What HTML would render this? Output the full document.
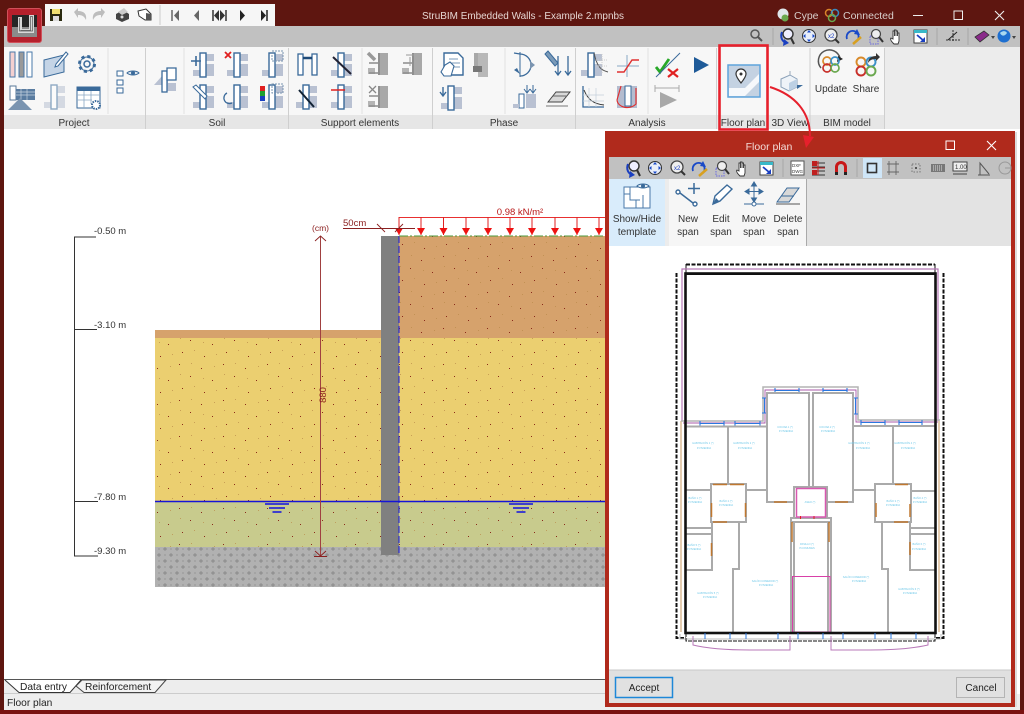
<!DOCTYPE html>
<html><head><meta charset="utf-8"><title>StruBIM Embedded Walls</title>
<style>html,body{margin:0;padding:0;background:#fff;overflow:hidden}svg{display:block;filter:blur(.35px)}text{font-family:"Liberation Sans",sans-serif}</style></head>
<body>
<svg width="1024" height="714" viewBox="0 0 1024 714" xmlns="http://www.w3.org/2000/svg">
<defs>
<pattern id="dots" width="44" height="36" patternUnits="userSpaceOnUse">
<g fill="#8a2a1a"><rect x="3" y="4" width="1" height="1"/><rect x="25" y="8" width="1" height="1"/><rect x="14" y="16" width="1" height="1"/><rect x="36" y="20" width="1" height="1"/><rect x="6" y="28" width="1" height="1"/><rect x="28" y="32" width="1" height="1"/></g>
<g fill="#b98a4a" opacity=".7"><rect x="15" y="3" width="1" height="1"/><rect x="38" y="6" width="1" height="1"/><rect x="4" y="14" width="1" height="1"/><rect x="27" y="18" width="1" height="1"/><rect x="18" y="26" width="1" height="1"/><rect x="40" y="30" width="1" height="1"/></g>
</pattern>
<pattern id="rock" width="12" height="12" patternUnits="userSpaceOnUse">
<rect width="12" height="12" fill="#b1b1b1"/>
<path d="M1 3H5M3 1V5M7 9H11M9 7V11" stroke="#7f7f7f" stroke-width=".7"/>
<rect x="8" y="2" width="2" height="2" fill="#a4a4a4"/><rect x="2" y="8" width="2" height="2" fill="#a4a4a4"/>
</pattern>
<g id="w"><path fill="#b9c1d2" d="M-10 5H-3V11H-10ZM3-11H11V-4H3ZM3-1H11V11H3Z"/><rect x="-3" y="-12" width="6" height="24" fill="#fff" stroke="#3a6a9a" stroke-width="1.400"/></g>
<g id="wg"><path fill="#b4b4b4" d="M-10 4H-3V10H-10Z"/><rect x="2" y="-11" width="8" height="22" fill="#a8a8a8"/><path d="M-9-1H2M-9 9H2" stroke="#8c8c8c" stroke-width="1.600"/><rect x="0" y="-11" width="2" height="22" fill="#8f8f8f"/></g>
<g id="ar"><path d="M0 0V18" stroke="#e02020" stroke-width="1"/><path d="M-4 11H4L0 18Z" fill="#ee1111"/></g>
<g id="ws"><path d="M-12 0H12" stroke="#1010e0" stroke-width="1.500"/><path d="M-8 4H8" stroke="#1010e0" stroke-width="1.500"/><path d="M-4.500 8H4.500" stroke="#1010e0" stroke-width="1.500"/></g>
<g id="zoomset">
<circle cx="1" cy="-2" r="5" fill="#eef" stroke="#333" stroke-width="1.400"/><path d="M4 2L7 8" stroke="#333" stroke-width="2"/><path d="M-5-4C-7 1-5 6 0 7" fill="none" stroke="#1a3fc0" stroke-width="2"/><path d="M-3 3L2 7-4 10Z" fill="#1a3fc0"/>
<circle cx="22" cy="0" r="6.500" fill="#e8eefa" stroke="#333"/><path d="M22-6L24-3.500H20ZM22 6L24 3.500H20ZM16 0L18.500-2V2ZM28 0L25.500-2V2Z" fill="#1a4ac8"/>
<circle cx="44" cy="-1" r="6" fill="#eee" stroke="#444" stroke-width="1.300"/><path d="M48 3L52 7" stroke="#333" stroke-width="2"/><text x="41" y="2" font-size="6" fill="#1a3fc0">x2</text>
<path d="M60 3a6 6 0 1 1 10 2" fill="none" stroke="#1a4ac8" stroke-width="1.800"/><path d="M70-7L73-1 67-2Z" fill="#1a4ac8"/><path d="M66 8L74 1" stroke="#d8a020" stroke-width="2.500"/>
<rect x="83" y="0" width="8" height="8" fill="none" stroke="#6a6ae0" stroke-dasharray="1.500 1"/><circle cx="89" cy="-2" r="4.500" fill="#eee" stroke="#444" stroke-width="1.200"/><path d="M92 1L96 6" stroke="#333" stroke-width="2"/>
<path d="M107 8c-3-3-4-5-3-6l2 1 0-8 1.500 0 0 5 0-6 1.500 0 0 6 0-5 1.500 0 0 5 0-3 1.500 0 0 8-1 3Z" fill="#fff" stroke="#333" stroke-width=".9"/>
<rect x="127" y="-6" width="13" height="13" fill="#fff" stroke="#444"/><rect x="127" y="-6" width="13" height="3" fill="#38b8c8"/><path d="M130-1L137 5" stroke="#1a3fc0" stroke-width="1.800"/><path d="M138 6H133L138 1Z" fill="#1a3fc0"/>
</g>
</defs>

<!-- window base -->
<rect width="1024" height="714" fill="#fff"/>
<rect width="1024" height="26" fill="#5e1610"/>
<rect y="26" width="1024" height="22" fill="#c1c1c1"/>
<rect y="47" width="1024" height="83" fill="#ececec"/>
<rect x="4" y="47" width="880" height="68" fill="#f7f7f7"/>
<rect x="4" y="115" width="880" height="14" fill="#e6e6e6"/>
<rect y="129" width="1024" height="1" fill="#fff"/>

<!-- drawing -->
<g>
<rect x="155" y="330" width="226" height="8" fill="#d6a26c"/>
<rect x="399" y="236" width="206" height="102" fill="#d6a26c"/>
<rect x="155" y="338" width="450" height="163" fill="#ebcf70"/>
<rect x="155" y="501" width="450" height="46" fill="#c8cb8d"/>
<rect x="155" y="338" width="226" height="209" fill="url(#dots)"/>
<rect x="399" y="236" width="206" height="311" fill="url(#dots)"/>
<rect x="155" y="547" width="450" height="40" fill="url(#rock)"/>
<rect x="381" y="236" width="18" height="319" fill="#808080"/>
<path d="M399 236V555" stroke="#1818e0" stroke-width="1" stroke-dasharray="7 3"/>
<path d="M155 501.500H605" stroke="#1414d8" stroke-width="1.500"/>
<use href="#ws" x="277" y="504"/><use href="#ws" x="521" y="504"/>
<path d="M399 236H605" stroke="#4e9a3c" stroke-width="1" stroke-dasharray="9 2 2 2"/>
<path d="M399 217.500H605" stroke="#e83030" stroke-width="1"/>
<use href="#ar" x="399" y="217"/><use href="#ar" x="421" y="217"/><use href="#ar" x="443.500" y="217"/><use href="#ar" x="466" y="217"/><use href="#ar" x="488" y="217"/><use href="#ar" x="510" y="217"/><use href="#ar" x="532" y="217"/><use href="#ar" x="555" y="217"/><use href="#ar" x="577" y="217"/><use href="#ar" x="599" y="217"/>
<text x="520" y="215" text-anchor="middle" font-size="9.500" fill="#b81818">0.98 kN/m²</text>
<text x="343" y="226" font-size="9.500" fill="#8a1c1c">50cm</text>
<path d="M343 228.500H415M377 224L385 232M395 232L403 224" stroke="#8a2020" stroke-width=".9" fill="none"/>
<text x="312" y="231" font-size="8.500" fill="#8a1c1c">(cm)</text>
<path d="M320.500 236V556" stroke="#a04040" stroke-width="1"/>
<path d="M315 241L320.500 236 326 241M315 551L320.500 556 326 551M314 556.500H327" stroke="#8a2020" stroke-width=".9" fill="none"/>
<text transform="translate(326,395) rotate(-90)" text-anchor="middle" font-size="9.500" fill="#8a1c1c">880</text>
<path d="M74.500 237V556M74 237H96M74 329.500H97M74 501.500H98M74 556H98" stroke="#333" stroke-width="1" fill="none"/>
<g font-size="9.500" fill="#333"><text x="94" y="234">-0.50 m</text><text x="94" y="328">-3.10 m</text><text x="94" y="500">-7.80 m</text><text x="94" y="554">-9.30 m</text></g>
</g>

<!-- title bar items -->
<text x="523" y="19" text-anchor="middle" font-size="10.500" fill="#e6d6d2" textLength="202" lengthAdjust="spacingAndGlyphs">StruBIM Embedded Walls - Example 2.mpnbs</text>
<circle cx="783" cy="14" r="5.500" fill="#dfe6ea"/><circle cx="785" cy="18" r="3.500" fill="#6aa84f"/>
<text x="794" y="19" font-size="10.500" fill="#d8cfcc">Cype</text>
<circle cx="829" cy="13" r="3.500" fill="none" stroke="#d8842a" stroke-width="1.500"/><circle cx="835" cy="13" r="3.500" fill="none" stroke="#3a8ac0" stroke-width="1.500"/><circle cx="832" cy="18" r="3.500" fill="none" stroke="#6aa84f" stroke-width="1.500"/>
<text x="843" y="19" font-size="10.500" fill="#d8cfcc">Connected</text>
<path d="M913 15.500H923" stroke="#eee"/><rect x="954" y="11" width="8.500" height="8.500" fill="none" stroke="#eee"/><path d="M995 11L1004 20M1004 11L995 20" stroke="#eee" stroke-width="1.100"/>

<!-- logo -->
<rect x="7.500" y="8.500" width="34" height="34" rx="2.500" fill="#b5202c" stroke="#d0505a"/>
<rect x="12" y="15" width="25" height="22" fill="#262626"/>
<rect x="12" y="27" width="25" height="10" fill="#8a8a8a"/>
<path d="M18 17H22V29H29V15H34V33H18Z" fill="#d8d8d8"/><path d="M19.500 18V31H32.500V16.500H30.500V30.500H20.500" fill="none" stroke="#555" stroke-width=".7"/>

<!-- quick access -->
<rect x="45" y="4" width="230" height="22" fill="#f6f6f6"/>
<rect x="50" y="9" width="12" height="12" fill="#2a2a10"/><rect x="52" y="9" width="8" height="5" fill="#f0e070"/><rect x="53" y="16" width="6" height="5" fill="#ddd"/>
<path d="M74 12L78 8V11C84 11 87 14 86 20 84 16 82 15 78 15V18Z" fill="#bdbdbd"/>
<path d="M105 12L101 8V11C95 11 92 14 93 20 95 16 97 15 101 15V18Z" fill="#bdbdbd"/>
<path d="M116 14L123 10 129 14V19L122 22 116 19Z" fill="#444"/><path d="M118 12L124 8 128 12 122 15Z" fill="#ccc"/><circle cx="122" cy="17" r="1.500" fill="#ddd"/>
<path d="M138 11L146 9 151 14V20L145 20 139 16Z" fill="#fff" stroke="#333"/><path d="M146 13L151 14V20H146Z" fill="#555"/>
<path d="M160 5V25" stroke="#ccc"/>
<path d="M172 10V21" stroke="#666" stroke-width="1.500"/><path d="M179 10V21L174 15.500Z" fill="#666"/>
<path d="M199 10V21L194 15.500Z" fill="#666"/>
<path d="M213 10V21" stroke="#333" stroke-width="1.500"/><path d="M219 10V21L214 15.500ZM220 10V21L225 15.500Z" fill="#333"/><path d="M226 10V21" stroke="#333" stroke-width="1.500"/>
<path d="M240 10V21L245 15.500Z" fill="#222"/>
<path d="M261 10V21L266 15.500Z" fill="#222"/><path d="M267 10V21" stroke="#222" stroke-width="1.500"/>

<!-- grey toolbar -->
<circle cx="755" cy="34" r="4" fill="none" stroke="#555" stroke-width="1.500"/><path d="M758 37L762 41" stroke="#555" stroke-width="2"/>
<path d="M773 28V45M937 28V45M968 28V45" stroke="#a8a8a8"/>
<use href="#zoomset" x="787" y="36"/>
<path d="M946 40H960M953 30V42" stroke="#333" stroke-dasharray="2 1" fill="none"/><path d="M948 40L957 32" stroke="#222"/>
<path d="M975 37L984 31 989 35 980 42Z" fill="#8a2a8a" stroke="#333" stroke-width=".8"/><path d="M991 36H995L993 39Z" fill="#444"/>
<circle cx="1004" cy="36" r="6.500" fill="#1e6fd0"/><path d="M1000 33C1003 30 1006 31 1007 33 1005 36 1002 37 1000 33Z" fill="#a8d8f0"/><path d="M1012 36H1016L1014 39Z" fill="#444"/>

<!-- ribbon separators -->
<path d="M108 48V114M184 48V114M362 48V114M505 48V114M648 48V114" stroke="#e2e2e2"/>
<path d="M145.500 48V129M288.500 48V129M432.500 48V129M575.500 48V129M716.500 48V129M810 48V129M884.500 48V129" stroke="#cfcfcf"/>
<!-- project -->
<rect x="10" y="52" width="5" height="25" fill="#f4d0d0" stroke="#4a78a8"/><rect x="19" y="52" width="5" height="25" fill="#999" stroke="#4a78a8"/><rect x="27" y="52" width="5" height="25" fill="#fff" stroke="#4a78a8"/>
<path d="M44 60L64 55V72L44 77Z" fill="#c4d4e6" stroke="#3a6a9a"/><path d="M56 64L66 52 68 54 58 66 55 67Z" fill="#fff" stroke="#3a6a9a"/>
<circle cx="87" cy="64" r="7.500" fill="none" stroke="#3a6a9a" stroke-width="3" stroke-dasharray="3 2.900"/><circle cx="87" cy="64" r="7" fill="none" stroke="#3a6a9a"/><circle cx="87" cy="64" r="3" fill="none" stroke="#3a6a9a" stroke-width="1.500"/>
<rect x="10" y="86" width="6" height="14" fill="#fff" stroke="#5a7a9a"/><rect x="16" y="89" width="19" height="11" fill="#5a7ca0"/><path d="M16 92H35M16 95H35M21 89V100M27 89V100" stroke="#c8d4e0" stroke-width=".7"/><path d="M8 110L20 98 32 110Z" fill="#7a94b0"/>
<g transform="translate(54,97)"><use href="#w" opacity=".55"/></g>
<rect x="77" y="87" width="23" height="21" fill="#fff" stroke="#3a6a9a"/><rect x="77" y="87" width="23" height="4" fill="#3a6a9a"/><path d="M77 95H100M77 100H92M84 91V108M91 91V104" stroke="#8aa8c4" stroke-width=".8"/><circle cx="96" cy="105" r="4" fill="#fff" stroke="#3a6a9a" stroke-width="2" stroke-dasharray="1.500 1"/>
<g fill="#fff" stroke="#3a6a9a"><rect x="117" y="71" width="6" height="5"/><rect x="117" y="80" width="6" height="5"/><rect x="117" y="88" width="6" height="5"/></g>
<path d="M127 73A7 4 0 0 1 139 73A7 4 0 0 1 127 73Z" fill="#dfe8f0" stroke="#3a6a9a"/><circle cx="133" cy="73" r="2" fill="#3a6a9a"/>
<!-- soil -->
<g transform="translate(165,80)"><path d="M-11 5H-3V11H11V3H3V-4H-3" fill="#b9c1d2"/><rect x="-3" y="-9" width="5" height="21" fill="#fff" stroke="#3a6a9a" stroke-width="1.300"/><path d="M2-12H11V0H2Z" fill="#fff" stroke="#3a6a9a" stroke-width="1.300"/></g>
<use href="#w" x="203" y="65"/><path d="M191 61H201M196 56V66" stroke="#3a6a9a" stroke-width="1.600"/>
<use href="#w" x="237" y="65"/><path d="M225 52L231 58M231 52L225 58" stroke="#e02020" stroke-width="1.800"/>
<use href="#w" x="272" y="65"/><rect x="272" y="51" width="11" height="10" fill="none" stroke="#7a94b0" stroke-dasharray="2 1"/>
<use href="#w" x="203" y="97"/><path d="M193 87L205 99 207 96 196 85Z" fill="#fff" stroke="#3a6a9a"/>
<use href="#w" x="237" y="97"/><path d="M227 93A5 5 0 0 0 232 103" fill="none" stroke="#3a6a9a" stroke-width="1.300"/>
<use href="#w" x="272" y="97"/><rect x="260" y="86" width="5" height="5" fill="#e02020"/><rect x="260" y="91" width="5" height="5" fill="#20a030"/><rect x="260" y="96" width="5" height="5" fill="#1a3fc0"/><rect x="272" y="84" width="11" height="9" fill="none" stroke="#7a94b0" stroke-dasharray="2 1"/>
<!-- support -->
<rect x="298" y="54" width="5" height="21" fill="#fff" stroke="#3a6a9a" stroke-width="1.300"/><rect x="312" y="54" width="5" height="21" fill="#fff" stroke="#3a6a9a" stroke-width="1.300"/><path d="M303 58H312" stroke="#1e4a78" stroke-width="2.500"/>
<use href="#w" x="341" y="65"/><path d="M333 57L351 74" stroke="#223" stroke-width="2"/>
<use href="#w" x="306" y="97"/><path d="M299 90L314 107" stroke="#123" stroke-width="2"/>
<use href="#w" x="341" y="97"/><path d="M331 90H345" stroke="#e02020" stroke-width="1.500"/>
<use href="#wg" x="378" y="64"/><path d="M368 53L375 60" stroke="#999" stroke-width="3.500"/>
<use href="#wg" x="412" y="64"/><path d="M406 55H414M410 66V57" stroke="#999"/>
<use href="#wg" x="378" y="97"/><path d="M369 86L376 93M376 86L369 93" stroke="#888" stroke-width="1.300"/>
<!-- phase -->
<path d="M444 53H458L463 58V75H444Z" fill="#fff" stroke="#3a6a9a" stroke-width="1.400"/><path d="M449 59H458M449 63H460M449 67H460" stroke="#7a9ab8"/><path d="M441 72L445 65 450 62 454 66 451 76H444Z" fill="#fff" stroke="#3a6a9a" stroke-width="1.100"/>
<rect x="474" y="53" width="4" height="19" fill="#a8a8a8"/><rect x="478" y="53" width="10" height="24" fill="#b8b8b8"/><rect x="473" y="66" width="9" height="6" fill="#777"/>
<use href="#w" x="451" y="98"/><path d="M443 87V95M440 92L443 96 446 92" stroke="#3a6a9a" fill="none" stroke-width="1.400"/>
<!-- phase 2 -->
<path d="M520 52V77" stroke="#3a6a9a"/><path d="M520 54A11 11 0 0 1 520 76M520 54L514 53" fill="none" stroke="#3a6a9a" stroke-width="1.300"/><path d="M530 61L535 65 530 69Z" fill="#7a94b0"/><path d="M514 70L520 74 517 68Z" fill="#3a6a9a"/>
<path d="M545 54L555 66 558 63 548 51Z" fill="#7a9ab8" stroke="#3a6a9a"/><path d="M558 56V75M568 56V75M555 71L558 75 561 71M565 71L568 75 571 71" stroke="#3a6a9a" stroke-width="1.300" fill="none"/>
<rect x="519" y="94" width="5" height="14" fill="#fff" stroke="#3a6a9a"/><rect x="526" y="94" width="10" height="14" fill="#b9c1d2"/><rect x="513" y="104" width="6" height="4" fill="#b9c1d2"/><path d="M527 85V92M533 85V92M524 89L527 93 530 89M530 89L533 93 536 89" stroke="#3a6a9a" fill="none"/>
<path d="M548 102L556 92H570L562 102Z" fill="#d8d8d8" stroke="#444"/><path d="M553 96H567" stroke="#666"/><path d="M546 106H568" stroke="#777"/>
<!-- analysis -->
<use href="#w" x="591" y="65"/><path d="M594 53C597 66 600 70 608 72" stroke="#555" fill="none"/><path d="M596 60H608M596 66H608M602 54V74" stroke="#ccc" stroke-dasharray="1 1" fill="none"/>
<path d="M617 66H639M627 55V77" stroke="#8aa8c4"/><path d="M617 72H624L632 60H639" stroke="#e03030" stroke-width="1.400" fill="none"/>
<path d="M583 86V107H604" stroke="#3a6a9a" stroke-width="1.300" fill="none"/><path d="M584 90C588 100 594 104 604 105" stroke="#333" fill="none"/><path d="M589 88V107M596 88V107M583 95H604M583 101H604" stroke="#c4cfdb" stroke-width=".7"/>
<rect x="617" y="86" width="20" height="22" fill="#b4bccf"/><rect x="625" y="86" width="6" height="20" fill="#fff" stroke="#3a6a9a"/><path d="M617 100C618 108 630 110 636 104V88M621 86L617 100" stroke="#e03030" stroke-width="1.200" fill="none"/>
<path d="M656 67L660 72 669 59" stroke="#28a828" stroke-width="2.800" fill="none"/><path d="M656 77L680 53" stroke="#3a6a9a"/><path d="M668 69L678 77M678 69L668 77" stroke="#e02020" stroke-width="2.200"/>
<path d="M655 85V92M679 85V92M655 88H679" stroke="#aaa"/><path d="M660 92L677 100 660 108Z" fill="#a8a8a8"/>
<path d="M694 57L709 65 694 73Z" fill="#1e5a98"/>
<!-- floor plan -->
<rect x="728" y="65" width="32" height="32" fill="#c4d2e2" stroke="#5ea4dc" stroke-width="1.500"/><path d="M729 96V88H745L759 74V82L745 96Z" fill="#fff" opacity=".85"/><path d="M741 83C737 78 736 76 736 74A5 5 0 0 1 746 74C746 76 745 78 741 83Z" fill="#fff" stroke="#333" stroke-width="1.200"/><circle cx="741" cy="74" r="1.500" fill="#333"/>
<!-- 3d -->
<path d="M781 79L790 75 797 79V87L789 91 781 87Z" fill="#eef3f8" stroke="#8aa0b8"/><path d="M789 83V91L797 87V79Z" fill="#bcd0e4"/><path d="M797 85L803 85 797 89Z" fill="#3a6a9a"/><path d="M790 75V71" stroke="#9ab"/>
<!-- BIM -->
<path d="M821 68A11 11 0 1 1 840 58" fill="none" stroke="#555" stroke-width="1.500"/><path d="M838 56L843 59 837 62Z" fill="#222"/>
<circle cx="827" cy="61" r="4" fill="none" stroke="#d88a2a" stroke-width="1.700"/><circle cx="835" cy="61" r="4" fill="none" stroke="#3a90c8" stroke-width="1.700"/><circle cx="827" cy="68" r="4" fill="none" stroke="#c8302a" stroke-width="1.700"/><circle cx="835" cy="68" r="4" fill="none" stroke="#6aa84f" stroke-width="1.700"/>
<circle cx="861" cy="62" r="4.500" fill="none" stroke="#d88a2a" stroke-width="1.900"/><circle cx="871" cy="62" r="4.500" fill="none" stroke="#3a90c8" stroke-width="1.900"/><circle cx="861" cy="71" r="4.500" fill="none" stroke="#c8302a" stroke-width="1.900"/><circle cx="871" cy="71" r="4.500" fill="none" stroke="#6aa84f" stroke-width="1.900"/>
<path d="M868 63C868 58 872 56 876 56V53L880 57 876 61V59C872 59 870 60 868 63Z" fill="#333"/>
<g font-size="10" fill="#333" text-anchor="middle"><text x="831" y="92">Update</text><text x="866" y="92">Share</text>
<text x="74" y="126">Project</text><text x="217" y="126">Soil</text><text x="360" y="126">Support elements</text><text x="504" y="126">Phase</text><text x="647" y="126">Analysis</text><text x="743" y="126">Floor plan</text><text x="790" y="126">3D View</text><text x="847" y="126">BIM model</text></g>

<!-- tabs/status -->
<rect x="4" y="680" width="601" height="14" fill="#ededed"/>
<path d="M4 679.500H605" stroke="#555"/>
<path d="M5 680L19 692.500H70L81 680" fill="#fff"/><path d="M5 680L19 692.500H70L81 680" fill="none" stroke="#333"/>
<path d="M76 686L82 680H166L155 692.500H84Z" fill="#f2f2f2" stroke="#444"/>
<text x="20" y="690" font-size="10.200" fill="#222">Data entry</text>
<text x="85" y="690" font-size="10.200" fill="#222">Reinforcement</text>
<rect x="4" y="694" width="1016" height="16" fill="#eeeeee"/><path d="M4 693.500H605" stroke="#ccc"/>
<text x="7" y="706" font-size="10.200" fill="#222">Floor plan</text>

<!-- frame -->
<rect x="0" y="26" width="4" height="688" fill="#5e1610"/>
<rect x="1020" y="26" width="4" height="688" fill="#5e1610"/>
<rect x="0" y="710" width="1024" height="4" fill="#7a1210"/>

<!-- dialog -->
<rect x="1015" y="132" width="2" height="575" fill="#ddd"/>
<rect x="605" y="131" width="410" height="576" fill="#b02a1c"/>
<text x="769" y="150" text-anchor="middle" font-size="10.500" fill="#f3dcd8">Floor plan</text>
<rect x="946" y="141" width="8.500" height="8.500" fill="none" stroke="#fff"/><path d="M987 141L996 150M996 141L987 150" stroke="#fff" stroke-width="1.100"/>
<rect x="609" y="157" width="402" height="22" fill="#c1c1c1"/>
<use href="#zoomset" x="633" y="168"/>
<path d="M783 159V177M857 159V177" stroke="#a8a8a8"/>
<rect x="791" y="161" width="13" height="14" fill="#fff" stroke="#555"/><text x="792" y="167" font-size="4.500" fill="#333">DXF</text><text x="792" y="173" font-size="4.500" fill="#333">DWG</text>
<path d="M812 163H825M812 167H825M812 171H825M812 175H825" stroke="#333" stroke-width=".9"/><path d="M812 168H825M818 161V175" stroke="#d02020"/><rect x="812" y="161" width="5" height="5" fill="#c02020"/><rect x="812" y="170" width="5" height="5" fill="#c02020"/>
<path d="M835 175V167A6 6 0 0 1 847 167V175H844V167A3 3 0 0 0 838 167V175Z" fill="#c81818"/><rect x="835" y="172" width="3" height="3" fill="#222"/><rect x="844" y="172" width="3" height="3" fill="#222"/>
<rect x="863" y="158" width="19" height="20" fill="#cfe6f8"/><rect x="867.500" y="163.500" width="9" height="9" fill="none" stroke="#333" stroke-width="1.600"/>
<path d="M887 164H899M887 172H899M889 161V175M896 161V175" stroke="#666" stroke-width=".9"/>
<rect x="912" y="164" width="8" height="8" fill="none" stroke="#777" stroke-dasharray="1.500 1.500"/><rect x="915" y="167" width="2" height="2" fill="#555"/>
<rect x="931" y="164" width="14" height="8" fill="#777"/><path d="M933 166H943M933 168H943M933 170H943" stroke="#ddd" stroke-dasharray="1 1"/>
<rect x="953" y="162" width="14" height="9" fill="#eee" stroke="#444"/><text x="955" y="169" font-size="6" fill="#333">1.00</text><path d="M953 174H967" stroke="#444"/>
<path d="M978 175H990M980 175V163L989 174" stroke="#555" fill="none"/>
<circle cx="1005" cy="168" r="6" fill="none" stroke="#999"/><path d="M1005 168H1011" stroke="#999"/>
<rect x="609" y="179" width="402" height="67" fill="#e3e3e3"/>
<rect x="609" y="179" width="56" height="67" fill="#d9ecfb"/>
<rect x="665" y="179" width="4" height="67" fill="#ececec"/>
<rect x="669" y="179" width="137" height="67" fill="#f6f6f6"/>
<path d="M806.500 179V246" stroke="#aaa"/>
<rect x="624" y="187" width="26" height="21" fill="#fff" stroke="#4a78a8"/><path d="M630 187V200H640M630 194H624M636 200V208M643 195V208" stroke="#4a78a8" fill="none"/>
<path d="M637 186A7 4 0 0 1 649 186A7 4 0 0 1 637 186Z" fill="#eaf2f8" stroke="#3a6a9a"/><circle cx="643" cy="186" r="2" fill="#3a6a9a"/>
<circle cx="678" cy="192" r="2" fill="#fff" stroke="#3a6a9a" stroke-width="1.400"/><circle cx="695" cy="204" r="2" fill="#fff" stroke="#3a6a9a" stroke-width="1.400"/><path d="M680 193L693 203M694 183V194M688 188.500H700" stroke="#3a6a9a" stroke-width="1.500"/>
<path d="M713 204L715 196 727 185 732 189 720 201Z" fill="#fff" stroke="#3a6a9a" stroke-width="1.400"/><path d="M713 204L716 198 719 201Z" fill="#3a6a9a"/>
<path d="M754 184V199M747 191.500H761M754 182L751.500 186H756.500ZM754 202L751.500 198H756.500ZM745 191.500L749 189V194ZM763 191.500L759 189V194Z" stroke="#3a6a9a" fill="#3a6a9a"/><path d="M744 204H764" stroke="#3a6a9a"/><circle cx="754" cy="204" r="2" fill="#fff" stroke="#3a6a9a"/>
<path d="M777 202L787 188H799L789 202Z" fill="#d8d8d8" stroke="#3a6a9a"/><path d="M781 196H794" stroke="#3a6a9a"/><path d="M776 204H800" stroke="#777" stroke-width="1.300"/>
<g font-size="10" fill="#333" text-anchor="middle"><text x="637" y="222">Show/Hide</text><text x="637" y="235">template</text><text x="688" y="222">New</text><text x="688" y="235">span</text><text x="721" y="222">Edit</text><text x="721" y="235">span</text><text x="754" y="222">Move</text><text x="754" y="235">span</text><text x="788" y="222">Delete</text><text x="788" y="235">span</text></g>
<rect x="609" y="246" width="402" height="424" fill="#fff"/>
<rect x="609" y="670" width="402" height="33" fill="#e0e0e0"/><path d="M609 670H1011" stroke="#c8c8c8"/>
<rect x="615.500" y="677.500" width="57" height="20" fill="#e1e1e1" stroke="#1e88d8" stroke-width="1.500"/>
<rect x="956.500" y="677.500" width="48" height="20" fill="#e1e1e1" stroke="#b4b4b4"/>
<text x="644" y="691" text-anchor="middle" font-size="10" fill="#222">Accept</text>
<text x="981" y="691" text-anchor="middle" font-size="10" fill="#222">Cancel</text>

<!-- floor plan drawing -->
<g fill="none">
<rect x="686" y="264.500" width="249" height="10" stroke="#111" stroke-width="1" />
<path d="M686 264.500H935" stroke="#fff" stroke-width="1"/><path d="M686 264.500H935" stroke="#111" stroke-width="2" stroke-dasharray="4 1.500"/>
<path d="M676.500 273V638H686M943.500 273V638H935" stroke="#111" stroke-width="2" stroke-dasharray="4 1.500"/>
<path d="M682 421V269H938V421" stroke="#b87ab8" stroke-width="1.200"/>
<path d="M681 421V632M939 421V632" stroke="#c89a60" stroke-width="1"/>
<path d="M680 634V639H941V634" stroke="#bbb" stroke-width="1"/>
<!-- upper walls -->
<path d="M681 421H763V387H858V420H940" stroke="#b4b4b4" stroke-width="1.500"/>
<path d="M683 423H765V390H856V422H938" stroke="#a858a8" stroke-width=".9"/>
<g stroke="#2a78e0" stroke-width="1.100"><path d="M700 423.500H724M735 423.500H760M775 390.500H799M823 390.500H847M861 422.500H885M899 422.500H922M764.500 398V413M855.500 398V414"/><path d="M700 421V426M724 421V426M735 421V426M760 421V426M775 388V393M799 388V393M823 388V393M847 388V393M861 420V425M885 420V425M899 420V425M922 420V425M762 398H767M762 413H767M853 398H858M853 414H858"/></g>
<g stroke="#aaaaaa" stroke-width="2">
<path d="M686 426.500H767V393H809V487M813 487V393H853V426H935M728 426V484M893 426V484"/>
<path d="M767 393V502H794M853 393V502H827"/>
<path d="M686 490H711M746 490H767M854 490H875M911 491H935"/>
<rect x="711" y="484" width="35" height="38"/><rect x="875" y="484" width="36" height="38"/>
<rect x="794" y="487" width="33" height="31"/>
<path d="M686 528H711M686 534H711M910 528H935M910 534H935"/>
<path d="M712 522V570H686M910 522V570H935"/>
<path d="M739 522V569H733V633M882 522V569H888V633"/>
<path d="M791 518H831V522H791ZM791 522V633M794 522V633M828 522V633M831 522V633"/>
</g>
<g stroke="#c07830" stroke-width="1.500"><path d="M713 484.500H727M730 484.500H744M713 522H727M711.500 503V517M745.500 503V517M711.500 543V556M774 502H787M835 502H848M895 484.500H908M894 522H908M876 503V517M910 504V517M910 542V555M792 522V542M829 522V542"/></g>
<rect x="796.500" y="488.500" width="29" height="28.500" stroke="#d858b0" stroke-width="1.500"/>
<path d="M800.500 516V519M814 516V519" stroke="#e02020"/>
<rect x="792.500" y="576.500" width="37.500" height="55.500" stroke="#d840a8" stroke-width="1"/>
<!-- thick frame -->
<rect x="685.500" y="273.500" width="250" height="359.500" stroke="#111" stroke-width="2.600"/>
<rect x="686" y="633" width="249" height="8" stroke="#111" stroke-width="1" stroke-dasharray="4 1"/>
<path d="M705 633V639M730 633V639M746 633V639M778 633V639M798 633V639M823 633V639M843 633V639M875 633V639M891 633V639M916 633V639" stroke="#2a78e0" stroke-width="1"/>
<path d="M693 636V645C705 648 722 650 750 650H790V636M831 636V650H870C895 650 915 648 928 645V636" stroke="#b878b8" stroke-width="1"/>
</g>
<g font-size="2.600" fill="#70c8e8" text-anchor="middle">
<text x="703" y="444">HABITACIÓN 1 (*)</text><text x="704" y="449">P.VIVIENDA</text>
<text x="744" y="444">HABITACIÓN 2 (*)</text><text x="745" y="449">P.VIVIENDA</text>
<text x="785" y="428">COCINA 1 (*)</text><text x="786" y="432">P.VIVIENDA</text>
<text x="827" y="428">COCINA 2 (*)</text><text x="828" y="432">P.VIVIENDA</text>
<text x="859" y="444">HABITACIÓN 3 (*)</text><text x="863" y="449">P.VIVIENDA</text>
<text x="905" y="444">HABITACIÓN 4 (*)</text><text x="908" y="449">P.VIVIENDA</text>
<text x="695" y="499">BAÑO 1 (*)</text><text x="695" y="503">P.VIVIENDA</text>
<text x="726" y="502">BAÑO 2 (*)</text><text x="726" y="506">P.VIVIENDA</text>
<text x="810" y="503">ASEO (*)</text>
<text x="893" y="502">BAÑO 3 (*)</text><text x="893" y="506">P.VIVIENDA</text>
<text x="920" y="499">BAÑO 4 (*)</text><text x="920" y="503">P.VIVIENDA</text>
<text x="694" y="546">BAÑO 5 (*)</text><text x="694" y="550">P.VIVIENDA</text>
<text x="919" y="545">BAÑO 6 (*)</text><text x="919" y="550">P.VIVIENDA</text>
<text x="807" y="545">PASILLO (*)</text><text x="807" y="549">P.COMUNES</text>
<text x="765" y="582">SALÓN COMEDOR (*)</text><text x="766" y="586">P.VIVIENDA</text>
<text x="856" y="578">SALÓN COMEDOR (*)</text><text x="859" y="582">P.VIVIENDA</text>
<text x="708" y="594">HABITACIÓN 5 (*)</text><text x="710" y="598">P.VIVIENDA</text>
<text x="909" y="590">HABITACIÓN 6 (*)</text><text x="910" y="594">P.VIVIENDA</text>
</g>

<!-- red callouts -->
<rect x="719.500" y="45.500" width="48" height="84" fill="none" stroke="#e6202c" stroke-width="2.600"/>
<path d="M770 87C795 95 810 112 810 136" fill="none" stroke="#e6202c" stroke-width="2"/>
<path d="M803 135L814 137 806 148Z" fill="#e6202c"/>
</svg>
</body></html>
